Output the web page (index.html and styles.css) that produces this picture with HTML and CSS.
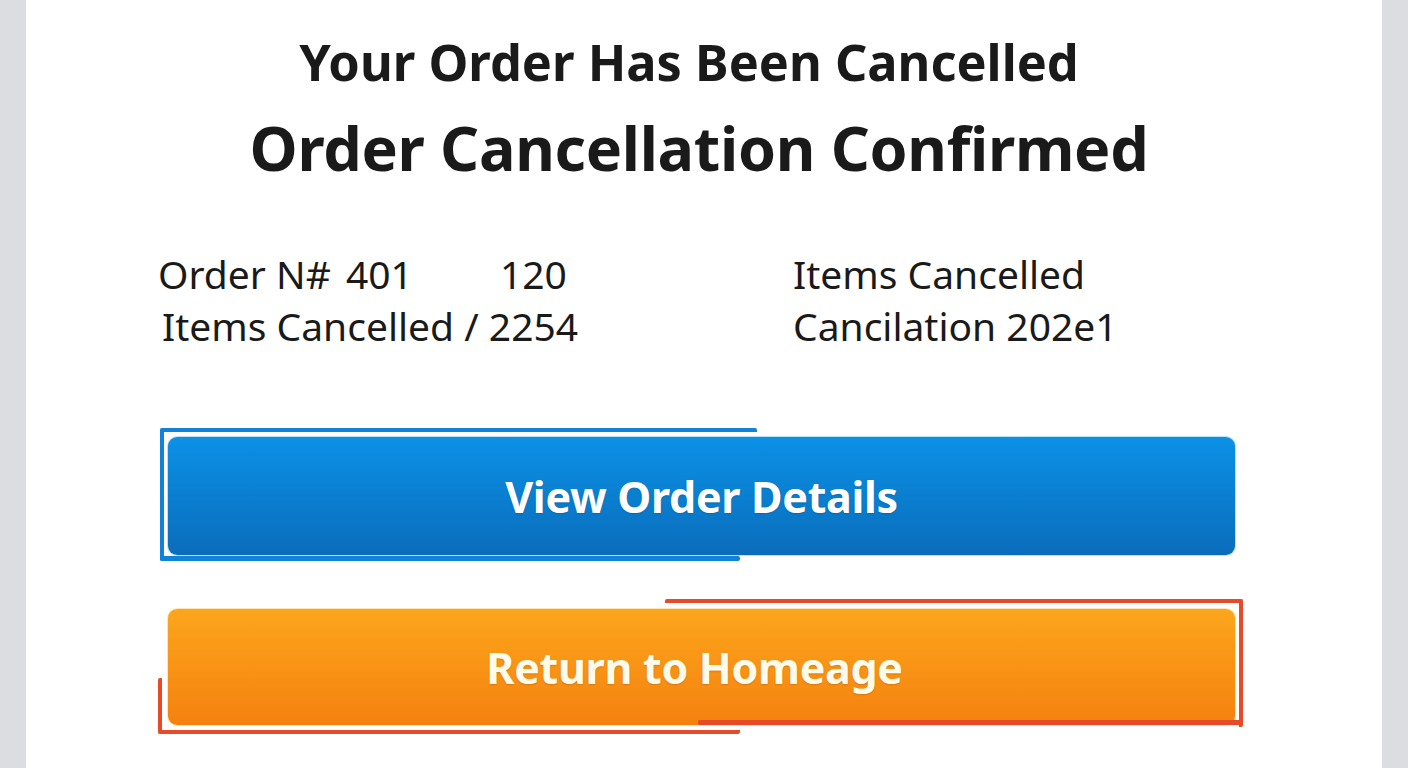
FILE: index.html
```html
<!DOCTYPE html>
<html lang="en">
<head>
    <meta charset="UTF-8">
    <meta name="viewport" content="width=device-width, initial-scale=1.0">
    <title>Order Cancelled</title>
    <link rel="stylesheet" href="styles.css">
</head>
<body>
    <main class="card">
        <!-- Headings -->
        <header class="titles">
            <h1 class="title-main">Your Order Has Been Cancelled</h1>
            <h2 class="title-sub">Order Cancellation Confirmed</h2>
        </header>

        <!-- Order summary -->
        <section class="summary">
            <div class="summary-col">
                <p class="summary-line"><span class="cell-label">Order N#</span><span class="cell-num">401</span><span>120</span></p>
                <p class="summary-line indent">Items Cancelled / 2254</p>
            </div>
            <div class="summary-col">
                <p class="summary-line">Items Cancelled</p>
                <p class="summary-line">Cancilation 202e1</p>
            </div>
        </section>

        <!-- Actions -->
        <div class="actions">
            <div class="btn-wrap btn-wrap-blue">
                <span class="deco deco-blue-top" aria-hidden="true"></span>
                <span class="deco deco-blue-bottom" aria-hidden="true"></span>
                <a href="#" class="btn btn-blue">View Order Details</a>
            </div>
            <div class="btn-wrap btn-wrap-orange">
                <span class="deco deco-orange-top" aria-hidden="true"></span>
                <span class="deco deco-orange-mid" aria-hidden="true"></span>
                <span class="deco deco-orange-bottom" aria-hidden="true"></span>
                <a href="#" class="btn btn-orange">Return to Homeage</a>
            </div>
        </div>
    </main>
</body>
</html>
```

FILE: styles.css
```css
:root {
    --side-bg: #dcdde0;
    --text-color: #1a1a1a;
    --blue-line: #1282d6;
    --orange-line: #e64a28;
}

* {
    margin: 0;
    padding: 0;
    box-sizing: border-box;
}

body {
    font-family: "Noto Sans", "Open Sans", sans-serif;
    background-color: var(--side-bg);
    color: var(--text-color);
    overflow: hidden;
}

.card {
    margin: 0 26px;
    height: 768px;
    background-color: #ffffff;
    padding-top: 32px;
}

.titles {
    text-align: center;
}

.title-main {
    font-size: 50.5px;
    line-height: 60px;
    font-weight: 700;
    padding-right: 30px;
}

.title-sub {
    font-size: 61px;
    line-height: 76px;
    font-weight: 700;
    letter-spacing: -0.3px;
    margin-top: 18px;
    padding-right: 10px;
}

.summary {
    display: grid;
    grid-template-columns: 635px 1fr;
    padding-left: 132px;
    margin-top: 62px;
}

.summary-line {
    font-size: 39px;
    line-height: 52px;
    white-space: nowrap;
}

.summary-line.indent {
    padding-left: 4px;
}

.cell-label {
    display: inline-block;
    width: 188px;
}

.cell-num {
    display: inline-block;
    width: 154px;
}

.actions {
    display: flex;
    flex-direction: column;
    gap: 38px;
    margin-top: 76px;
    margin-left: 132px;
    width: 1085px;
}

.btn-wrap {
    position: relative;
}

.btn-wrap-blue {
    padding: 9px 0 6px;
}

.btn-wrap-orange {
    padding: 10px 0 9px;
}

.btn {
    display: flex;
    align-items: center;
    justify-content: center;
    margin: 0 8px 0 10px;
    border-radius: 9px;
    color: #ffffff;
    font-size: 43px;
    font-weight: 700;
    text-decoration: none;
    letter-spacing: -0.3px;
    text-shadow: 0 1px 2px rgba(0, 0, 0, 0.15);
}

.btn-blue {
    height: 118px;
    background: linear-gradient(#0b91e6, #0a6dbb);
    box-shadow: 0 0 0 1px #b9e3fb;
}

.btn-orange {
    height: 116px;
    padding-right: 14px;
    color: #fffbea;
    background: linear-gradient(#fca61c, #f5810f);
    box-shadow: 0 0 0 1px #fde4b0;
}

/* decorative frame lines */
.deco {
    position: absolute;
    border-radius: 2px;
}

.deco-blue-top {
    left: 2px;
    top: 0;
    width: 597px;
    height: 133px;
    border-top: 4px solid var(--blue-line);
    border-left: 4px solid var(--blue-line);
    border-radius: 2px 2px 0 2px;
}

.deco-blue-bottom {
    left: 2px;
    bottom: 0;
    width: 580px;
    height: 5px;
    background-color: var(--blue-line);
}

.deco-orange-top {
    left: 507px;
    top: 0;
    width: 578px;
    height: 128px;
    border-top: 4px solid var(--orange-line);
    border-right: 4px solid var(--orange-line);
}

.deco-orange-mid {
    left: 540px;
    top: 121px;
    width: 545px;
    height: 5px;
    background-color: var(--orange-line);
}

.deco-orange-bottom {
    left: 0;
    top: 79px;
    width: 582px;
    height: 56px;
    border-left: 4px solid var(--orange-line);
    border-bottom: 4px solid var(--orange-line);
}
```
